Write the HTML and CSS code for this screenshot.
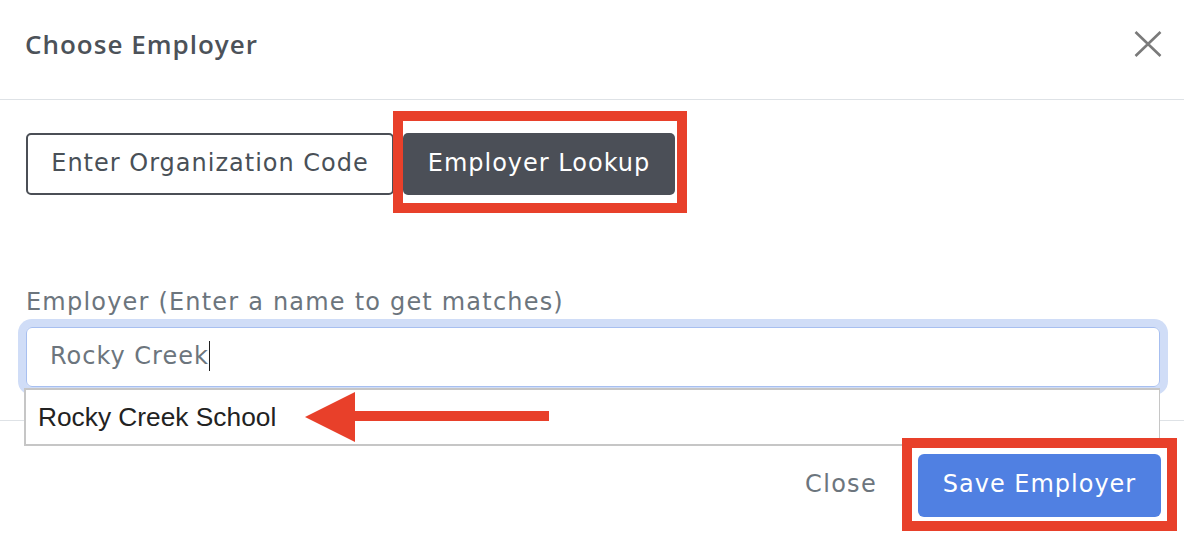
FILE: index.html
```html
<!DOCTYPE html>
<html lang="en">
<head>
<meta charset="utf-8">
<title>Choose Employer</title>
<link rel="stylesheet" href="styles.css">
</head>
<body>
<div class="modal">
  <header class="modal-header">
    <h1 class="modal-title">Choose Employer</h1>
    <button class="btn-x" aria-label="Close">
      <svg width="28" height="26" viewBox="0 0 28 26"><path d="M1.5 1 L26.5 25 M26.5 1 L1.5 25" stroke="#7a7a7a" stroke-width="2.6" fill="none"/></svg>
    </button>
  </header>
  <section class="modal-body">
    <div class="tabs">
      <button class="tab tab-outline">Enter Organization Code</button>
      <div class="tab-wrap">
        <button class="tab tab-active">Employer Lookup</button>
        <span class="mark mark-tab"></span>
      </div>
    </div>
    <div class="field">
      <label class="label">Employer (Enter a name to get matches)</label>
      <div class="input-wrap">
        <div class="input"><span class="value">Rocky Creek</span><span class="caret"></span></div>
        <ul class="menu">
          <li class="menu-item">Rocky Creek School</li>
        </ul>
        <svg class="arrow" width="246" height="54" viewBox="0 0 246 54"><polygon points="0,27 50,2 50,52" fill="#e8402a"/><rect x="48" y="21" width="196" height="10" fill="#e8402a"/></svg>
      </div>
    </div>
  </section>
  <footer class="modal-footer">
    <button class="btn-link">Close</button>
    <div class="save-wrap">
      <button class="btn-primary">Save Employer</button>
      <span class="mark mark-save"></span>
    </div>
  </footer>
</div>
</body>
</html>
```

FILE: styles.css
```css
* { box-sizing: border-box; }
html, body { margin: 0; padding: 0; background: #fff; }
body {
  font-family: "DejaVu Sans", "Open Sans", sans-serif;
  color: #495057;
  width: 1184px;
  height: 540px;
  overflow: hidden;
}
.modal { width: 1184px; }
.modal-header {
  height: 100px;
  border-bottom: 1px solid #dee2e6;
  display: flex;
  align-items: center;
  justify-content: space-between;
  padding: 0 22px 0 25px;
}
.modal-title {
  margin: 0;
  font-family: "Open Sans", "DejaVu Sans", sans-serif;
  font-size: 26px;
  font-weight: 600;
  color: #4c5259;
  letter-spacing: 1px;
  margin-top: -12px;
}
.btn-x {
  background: none;
  border: 0;
  padding: 0;
  margin-top: -11px;
  display: flex;
}
.modal-body {
  padding: 33px 24px 32px 26px;
  height: 320px;
}
.tabs {
  display: flex;
  gap: 9px;
}
.tab {
  font-family: inherit;
  font-size: 24px;
  letter-spacing: 1px;
  height: 62px;
  padding: 0;
  border-radius: 5px;
  cursor: pointer;
  padding-bottom: 3px;
}
.tab-outline {
  background: #fff;
  color: #495057;
  border: 2px solid #4b4f56;
  width: 368px;
}
.tab-wrap { position: relative; }
.tab-active {
  background: #4b4f57;
  color: #fff;
  border: 0;
  width: 272px;
}
.mark {
  position: absolute;
  border: 10px solid #e8402a;
  pointer-events: none;
}
.mark-tab { left: -10px; top: -22px; width: 294px; height: 102px; }
.field { margin-top: 92px; }
.label {
  display: block;
  font-size: 24px;
  letter-spacing: 1.2px;
  color: #6c757d;
  line-height: 30px;
  margin-bottom: 10px;
}
.input-wrap { position: relative; width: 1134px; }
.input {
  height: 60px;
  border: 1px solid #a7bff0;
  border-radius: 6px;
  box-shadow: 0 0 0 8px #d0ddf7;
  display: flex;
  align-items: center;
  padding-left: 23px;
  padding-bottom: 2px;
  font-size: 24px;
  letter-spacing: 1px;
  color: #6c757d;
}
.caret {
  display: inline-block;
  width: 1px;
  height: 30px;
  background: #222;
  margin-left: 0;
}
.menu {
  position: absolute;
  left: -2px;
  top: 61px;
  width: 1136px;
  height: 58px;
  margin: 0;
  padding: 0 0 0 12px;
  list-style: none;
  background: #fff;
  border: 2px solid #c6c6c6;
  border-right-width: 1px;
  display: flex;
  align-items: center;
}
.menu-item {
  font-family: "Liberation Sans", Arial, sans-serif;
  font-size: 26.3px;
  color: #222;
}
.arrow {
  position: absolute;
  left: 279px;
  top: 63px;
}
.modal-footer {
  border-top: 1px solid #dee2e6;
  height: 120px;
  display: flex;
  justify-content: flex-end;
  align-items: flex-start;
  padding: 33px 23px 0 0;
}
.btn-link {
  background: none;
  border: 0;
  font-family: inherit;
  font-size: 24px;
  letter-spacing: 1.3px;
  color: #6c757d;
  height: 63px;
  padding: 0 41px 3px 0;
}
.save-wrap { position: relative; }
.btn-primary {
  font-family: inherit;
  font-size: 24px;
  letter-spacing: 1px;
  color: #fff;
  background: #5080e2;
  border: 0;
  border-radius: 6px;
  height: 63px;
  width: 243px;
  padding: 0 0 3px;
}
.mark-save { left: -16px; top: -16px; width: 275px; height: 93px; }
```
